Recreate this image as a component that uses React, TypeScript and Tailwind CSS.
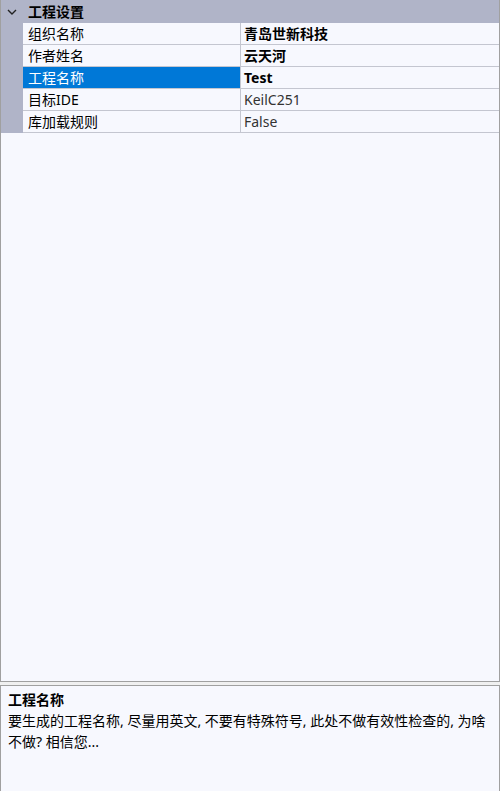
import React from "react";

type Row = { label: string; value: string; bold?: boolean; selected?: boolean };

const rows: Row[] = [
  { label: "组织名称", value: "青岛世新科技", bold: true },
  { label: "作者姓名", value: "云天河", bold: true },
  { label: "工程名称", value: "Test", bold: true, selected: true },
  { label: "目标IDE", value: "KeilC251" },
  { label: "库加载规则", value: "False" },
];

const font = { fontFamily: '"Segoe UI", "Noto Sans", "Noto Sans CJK SC", sans-serif' };

export default function App() {
  return (
    <div className="w-[500px] h-[791px] bg-[#f0f0f0] flex flex-col text-[14px] text-black" style={font}>
      {/* property grid */}
      <div className="h-[682px] border border-[#a0a0a0] border-t-0 bg-[#f7f8fe] flex flex-col">
        <div className="h-[23px] bg-[#b0b4c8] flex items-center">
          <div className="w-[22px] flex justify-center">
            <svg width="10" height="6" viewBox="0 0 10 6">
              <path d="M1 1 L5 5 L9 1" fill="none" stroke="#222" strokeWidth="1.4" />
            </svg>
          </div>
          <span className="pl-[5px] font-bold leading-none">工程设置</span>
        </div>
        <div className="flex">
          <div className="w-[22px] bg-[#b0b4c8]" />
          <div className="flex-1 flex flex-col">
            {rows.map((r) => (
              <div key={r.label} className="h-[22px] flex border-b border-[#c4c6d0]">
                <div
                  className={
                    "w-[218px] border-r border-[#c4c6d0] pl-[5px] flex items-center leading-none " +
                    (r.selected ? "bg-[#0078d7] text-white" : "")
                  }
                >
                  {r.label}
                </div>
                <div className={"flex-1 pl-[3px] flex items-center leading-none " + (r.bold ? "font-bold" : "text-[#333]")}>
                  {r.value}
                </div>
              </div>
            ))}
          </div>
        </div>
        <div className="flex-1" />
      </div>
      {/* description panel */}
      <div className="mt-[3px] flex-1 border border-[#a0a0a0] border-b-0 bg-[#f7f8fe] px-[7px] pt-[3px]">
        <div className="font-bold leading-[21px]">工程名称</div>
        <div className="leading-[21px]">
          要生成的工程名称, 尽量用英文, 不要有特殊符号, 此处不做有效性检查的, 为啥不做? 相信您...
        </div>
      </div>
    </div>
  );
}
